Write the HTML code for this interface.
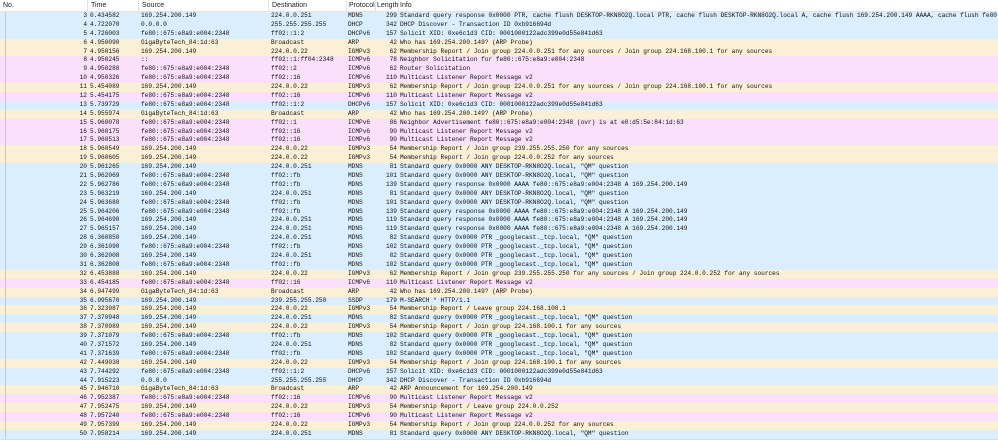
<!DOCTYPE html>
<html><head><meta charset="utf-8"><style>
*{margin:0;padding:0;box-sizing:border-box}
body{width:998px;height:443px;overflow:hidden;background:#fff;position:relative;font-family:"Liberation Mono",monospace;font-size:6.15px;color:#111}
#h{position:absolute;left:0;top:0;width:998px;height:12px;background:#fff;border-bottom:1px solid #e2e2e2;font-family:"Liberation Sans",sans-serif;font-size:7px;color:#222}
#h span{position:absolute;top:2px}
#h i{position:absolute;top:0;height:12px;width:1px;background:#e4e4e4}
#l{position:absolute;top:12px;left:0;width:998px}
.r{position:relative;width:998px;height:8.9px;line-height:8.9px;white-space:nowrap;overflow:hidden}
.b{background:#daeefe}.t{background:#fbf0d6}.p{background:#fbe0fc}
.r span{position:absolute;top:0}
.a{right:911px;text-align:right}.c{left:90px}.d{left:141px}.e{left:271px}.f{left:348px}.g{right:601px;text-align:right}.k{left:400px}
#gut{position:absolute;left:5px;top:12px;width:1px;height:427px;background:#c8c8c8}
#bot{position:absolute;left:0;top:439px;width:998px;height:4px;background:#fff;border-top:1px solid #ddd}
</style></head><body>
<div id="h"><span style="left:3px">No.</span><i style="left:87px"></i><span style="left:91px">Time</span><i style="left:138px"></i><span style="left:142px">Source</span><i style="left:268px"></i><span style="left:272px">Destination</span><i style="left:346px"></i><span style="left:349px">Protocol</span><i style="left:375px"></i><span style="left:377px">Length</span><i style="left:398px"></i><span style="left:400px">Info</span></div>
<div id="l">
<div class="r b"><span class="a">3</span><span class="c">0.434582</span><span class="d">169.254.200.149</span><span class="e">224.0.0.251</span><span class="f">MDNS</span><span class="g">299</span><span class="k">Standard query response 0x0000 PTR, cache flush DESKTOP-RKN8O2Q.local PTR, cache flush DESKTOP-RKN8O2Q.local A, cache flush 169.254.200.149 AAAA, cache flush fe80:</span></div>
<div class="r b"><span class="a">4</span><span class="c">4.722070</span><span class="d">0.0.0.0</span><span class="e">255.255.255.255</span><span class="f">DHCP</span><span class="g">342</span><span class="k">DHCP Discover - Transaction ID 0xb916694d</span></div>
<div class="r b"><span class="a">5</span><span class="c">4.726003</span><span class="d">fe80::675:e8a9:e004:2348</span><span class="e">ff02::1:2</span><span class="f">DHCPv6</span><span class="g">157</span><span class="k">Solicit XID: 0xe6c1d3 CID: 0001000122adc399e0d55e841d63</span></div>
<div class="r t"><span class="a">6</span><span class="c">4.950090</span><span class="d">GigaByteTech_84:1d:63</span><span class="e">Broadcast</span><span class="f">ARP</span><span class="g">42</span><span class="k">Who has 169.254.200.149? (ARP Probe)</span></div>
<div class="r t"><span class="a">7</span><span class="c">4.950156</span><span class="d">169.254.200.149</span><span class="e">224.0.0.22</span><span class="f">IGMPv3</span><span class="g">62</span><span class="k">Membership Report / Join group 224.0.0.251 for any sources / Join group 224.168.100.1 for any sources</span></div>
<div class="r p"><span class="a">8</span><span class="c">4.950245</span><span class="d">::</span><span class="e">ff02::1:ff04:2348</span><span class="f">ICMPv6</span><span class="g">78</span><span class="k">Neighbor Solicitation for fe80::675:e8a9:e004:2348</span></div>
<div class="r p"><span class="a">9</span><span class="c">4.950288</span><span class="d">fe80::675:e8a9:e004:2348</span><span class="e">ff02::2</span><span class="f">ICMPv6</span><span class="g">62</span><span class="k">Router Solicitation</span></div>
<div class="r p"><span class="a">10</span><span class="c">4.950326</span><span class="d">fe80::675:e8a9:e004:2348</span><span class="e">ff02::16</span><span class="f">ICMPv6</span><span class="g">110</span><span class="k">Multicast Listener Report Message v2</span></div>
<div class="r t"><span class="a">11</span><span class="c">5.454089</span><span class="d">169.254.200.149</span><span class="e">224.0.0.22</span><span class="f">IGMPv3</span><span class="g">62</span><span class="k">Membership Report / Join group 224.0.0.251 for any sources / Join group 224.168.100.1 for any sources</span></div>
<div class="r p"><span class="a">12</span><span class="c">5.454175</span><span class="d">fe80::675:e8a9:e004:2348</span><span class="e">ff02::16</span><span class="f">ICMPv6</span><span class="g">110</span><span class="k">Multicast Listener Report Message v2</span></div>
<div class="r b"><span class="a">13</span><span class="c">5.739729</span><span class="d">fe80::675:e8a9:e004:2348</span><span class="e">ff02::1:2</span><span class="f">DHCPv6</span><span class="g">157</span><span class="k">Solicit XID: 0xe6c1d3 CID: 0001000122adc399e0d55e841d63</span></div>
<div class="r t"><span class="a">14</span><span class="c">5.955974</span><span class="d">GigaByteTech_84:1d:63</span><span class="e">Broadcast</span><span class="f">ARP</span><span class="g">42</span><span class="k">Who has 169.254.200.149? (ARP Probe)</span></div>
<div class="r p"><span class="a">15</span><span class="c">5.960078</span><span class="d">fe80::675:e8a9:e004:2348</span><span class="e">ff02::1</span><span class="f">ICMPv6</span><span class="g">86</span><span class="k">Neighbor Advertisement fe80::675:e8a9:e004:2348 (ovr) is at e0:d5:5e:84:1d:63</span></div>
<div class="r p"><span class="a">16</span><span class="c">5.960175</span><span class="d">fe80::675:e8a9:e004:2348</span><span class="e">ff02::16</span><span class="f">ICMPv6</span><span class="g">90</span><span class="k">Multicast Listener Report Message v2</span></div>
<div class="r p"><span class="a">17</span><span class="c">5.960513</span><span class="d">fe80::675:e8a9:e004:2348</span><span class="e">ff02::16</span><span class="f">ICMPv6</span><span class="g">90</span><span class="k">Multicast Listener Report Message v2</span></div>
<div class="r t"><span class="a">18</span><span class="c">5.960549</span><span class="d">169.254.200.149</span><span class="e">224.0.0.22</span><span class="f">IGMPv3</span><span class="g">54</span><span class="k">Membership Report / Join group 239.255.255.250 for any sources</span></div>
<div class="r t"><span class="a">19</span><span class="c">5.960605</span><span class="d">169.254.200.149</span><span class="e">224.0.0.22</span><span class="f">IGMPv3</span><span class="g">54</span><span class="k">Membership Report / Join group 224.0.0.252 for any sources</span></div>
<div class="r b"><span class="a">20</span><span class="c">5.961265</span><span class="d">169.254.200.149</span><span class="e">224.0.0.251</span><span class="f">MDNS</span><span class="g">81</span><span class="k">Standard query 0x0000 ANY DESKTOP-RKN8O2Q.local, "QM" question</span></div>
<div class="r b"><span class="a">21</span><span class="c">5.962069</span><span class="d">fe80::675:e8a9:e004:2348</span><span class="e">ff02::fb</span><span class="f">MDNS</span><span class="g">101</span><span class="k">Standard query 0x0000 ANY DESKTOP-RKN8O2Q.local, "QM" question</span></div>
<div class="r b"><span class="a">22</span><span class="c">5.962786</span><span class="d">fe80::675:e8a9:e004:2348</span><span class="e">ff02::fb</span><span class="f">MDNS</span><span class="g">139</span><span class="k">Standard query response 0x0000 AAAA fe80::675:e8a9:e004:2348 A 169.254.200.149</span></div>
<div class="r b"><span class="a">23</span><span class="c">5.963219</span><span class="d">169.254.200.149</span><span class="e">224.0.0.251</span><span class="f">MDNS</span><span class="g">81</span><span class="k">Standard query 0x0000 ANY DESKTOP-RKN8O2Q.local, "QM" question</span></div>
<div class="r b"><span class="a">24</span><span class="c">5.963680</span><span class="d">fe80::675:e8a9:e004:2348</span><span class="e">ff02::fb</span><span class="f">MDNS</span><span class="g">101</span><span class="k">Standard query 0x0000 ANY DESKTOP-RKN8O2Q.local, "QM" question</span></div>
<div class="r b"><span class="a">25</span><span class="c">5.964206</span><span class="d">fe80::675:e8a9:e004:2348</span><span class="e">ff02::fb</span><span class="f">MDNS</span><span class="g">139</span><span class="k">Standard query response 0x0000 AAAA fe80::675:e8a9:e004:2348 A 169.254.200.149</span></div>
<div class="r b"><span class="a">26</span><span class="c">5.964690</span><span class="d">169.254.200.149</span><span class="e">224.0.0.251</span><span class="f">MDNS</span><span class="g">119</span><span class="k">Standard query response 0x0000 AAAA fe80::675:e8a9:e004:2348 A 169.254.200.149</span></div>
<div class="r b"><span class="a">27</span><span class="c">5.965157</span><span class="d">169.254.200.149</span><span class="e">224.0.0.251</span><span class="f">MDNS</span><span class="g">119</span><span class="k">Standard query response 0x0000 AAAA fe80::675:e8a9:e004:2348 A 169.254.200.149</span></div>
<div class="r b"><span class="a">28</span><span class="c">6.360850</span><span class="d">169.254.200.149</span><span class="e">224.0.0.251</span><span class="f">MDNS</span><span class="g">82</span><span class="k">Standard query 0x0000 PTR _googlecast._tcp.local, "QM" question</span></div>
<div class="r b"><span class="a">29</span><span class="c">6.361090</span><span class="d">fe80::675:e8a9:e004:2348</span><span class="e">ff02::fb</span><span class="f">MDNS</span><span class="g">102</span><span class="k">Standard query 0x0000 PTR _googlecast._tcp.local, "QM" question</span></div>
<div class="r b"><span class="a">30</span><span class="c">6.362008</span><span class="d">169.254.200.149</span><span class="e">224.0.0.251</span><span class="f">MDNS</span><span class="g">82</span><span class="k">Standard query 0x0000 PTR _googlecast._tcp.local, "QM" question</span></div>
<div class="r b"><span class="a">31</span><span class="c">6.362808</span><span class="d">fe80::675:e8a9:e004:2348</span><span class="e">ff02::fb</span><span class="f">MDNS</span><span class="g">102</span><span class="k">Standard query 0x0000 PTR _googlecast._tcp.local, "QM" question</span></div>
<div class="r t"><span class="a">32</span><span class="c">6.453888</span><span class="d">169.254.200.149</span><span class="e">224.0.0.22</span><span class="f">IGMPv3</span><span class="g">62</span><span class="k">Membership Report / Join group 239.255.255.250 for any sources / Join group 224.0.0.252 for any sources</span></div>
<div class="r p"><span class="a">33</span><span class="c">6.454185</span><span class="d">fe80::675:e8a9:e004:2348</span><span class="e">ff02::16</span><span class="f">ICMPv6</span><span class="g">110</span><span class="k">Multicast Listener Report Message v2</span></div>
<div class="r t"><span class="a">34</span><span class="c">6.947499</span><span class="d">GigaByteTech_84:1d:63</span><span class="e">Broadcast</span><span class="f">ARP</span><span class="g">42</span><span class="k">Who has 169.254.200.149? (ARP Probe)</span></div>
<div class="r b"><span class="a">35</span><span class="c">6.995670</span><span class="d">169.254.200.149</span><span class="e">239.255.255.250</span><span class="f">SSDP</span><span class="g">179</span><span class="k">M-SEARCH * HTTP/1.1</span></div>
<div class="r t"><span class="a">36</span><span class="c">7.323987</span><span class="d">169.254.200.149</span><span class="e">224.0.0.22</span><span class="f">IGMPv3</span><span class="g">54</span><span class="k">Membership Report / Leave group 224.168.100.1</span></div>
<div class="r b"><span class="a">37</span><span class="c">7.370948</span><span class="d">169.254.200.149</span><span class="e">224.0.0.251</span><span class="f">MDNS</span><span class="g">82</span><span class="k">Standard query 0x0000 PTR _googlecast._tcp.local, "QM" question</span></div>
<div class="r t"><span class="a">38</span><span class="c">7.370989</span><span class="d">169.254.200.149</span><span class="e">224.0.0.22</span><span class="f">IGMPv3</span><span class="g">54</span><span class="k">Membership Report / Join group 224.168.100.1 for any sources</span></div>
<div class="r b"><span class="a">39</span><span class="c">7.371079</span><span class="d">fe80::675:e8a9:e004:2348</span><span class="e">ff02::fb</span><span class="f">MDNS</span><span class="g">102</span><span class="k">Standard query 0x0000 PTR _googlecast._tcp.local, "QM" question</span></div>
<div class="r b"><span class="a">40</span><span class="c">7.371572</span><span class="d">169.254.200.149</span><span class="e">224.0.0.251</span><span class="f">MDNS</span><span class="g">82</span><span class="k">Standard query 0x0000 PTR _googlecast._tcp.local, "QM" question</span></div>
<div class="r b"><span class="a">41</span><span class="c">7.371639</span><span class="d">fe80::675:e8a9:e004:2348</span><span class="e">ff02::fb</span><span class="f">MDNS</span><span class="g">102</span><span class="k">Standard query 0x0000 PTR _googlecast._tcp.local, "QM" question</span></div>
<div class="r t"><span class="a">42</span><span class="c">7.449038</span><span class="d">169.254.200.149</span><span class="e">224.0.0.22</span><span class="f">IGMPv3</span><span class="g">54</span><span class="k">Membership Report / Join group 224.168.100.1 for any sources</span></div>
<div class="r b"><span class="a">43</span><span class="c">7.744292</span><span class="d">fe80::675:e8a9:e004:2348</span><span class="e">ff02::1:2</span><span class="f">DHCPv6</span><span class="g">157</span><span class="k">Solicit XID: 0xe6c1d3 CID: 0001000122adc399e0d55e841d63</span></div>
<div class="r b"><span class="a">44</span><span class="c">7.915223</span><span class="d">0.0.0.0</span><span class="e">255.255.255.255</span><span class="f">DHCP</span><span class="g">342</span><span class="k">DHCP Discover - Transaction ID 0xb916694d</span></div>
<div class="r t"><span class="a">45</span><span class="c">7.946710</span><span class="d">GigaByteTech_84:1d:63</span><span class="e">Broadcast</span><span class="f">ARP</span><span class="g">42</span><span class="k">ARP Announcement for 169.254.200.149</span></div>
<div class="r p"><span class="a">46</span><span class="c">7.952387</span><span class="d">fe80::675:e8a9:e004:2348</span><span class="e">ff02::16</span><span class="f">ICMPv6</span><span class="g">90</span><span class="k">Multicast Listener Report Message v2</span></div>
<div class="r t"><span class="a">47</span><span class="c">7.952475</span><span class="d">169.254.200.149</span><span class="e">224.0.0.22</span><span class="f">IGMPv3</span><span class="g">54</span><span class="k">Membership Report / Leave group 224.0.0.252</span></div>
<div class="r p"><span class="a">48</span><span class="c">7.957240</span><span class="d">fe80::675:e8a9:e004:2348</span><span class="e">ff02::16</span><span class="f">ICMPv6</span><span class="g">90</span><span class="k">Multicast Listener Report Message v2</span></div>
<div class="r t"><span class="a">49</span><span class="c">7.957399</span><span class="d">169.254.200.149</span><span class="e">224.0.0.22</span><span class="f">IGMPv3</span><span class="g">54</span><span class="k">Membership Report / Join group 224.0.0.252 for any sources</span></div>
<div class="r b"><span class="a">50</span><span class="c">7.958214</span><span class="d">169.254.200.149</span><span class="e">224.0.0.251</span><span class="f">MDNS</span><span class="g">81</span><span class="k">Standard query 0x0000 ANY DESKTOP-RKN8O2Q.local, "QM" question</span></div>
</div>
<div id="gut"></div>
<div id="bot"></div>
</body></html>
